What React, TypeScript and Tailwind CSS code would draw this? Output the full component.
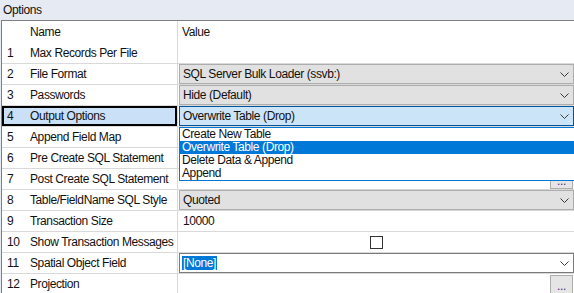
import React from "react";

type Row = {
  num: number;
  name: string;
  kind: "empty" | "combo" | "text" | "check" | "edit" | "button";
  value?: string;
};

const rows: Row[] = [
  { num: 1, name: "Max Records Per File", kind: "empty" },
  { num: 2, name: "File Format", kind: "combo", value: "SQL Server Bulk Loader (ssvb:)" },
  { num: 3, name: "Passwords", kind: "combo", value: "Hide (Default)" },
  { num: 4, name: "Output Options", kind: "combo", value: "Overwrite Table (Drop)" },
  { num: 5, name: "Append Field Map", kind: "empty" },
  { num: 6, name: "Pre Create SQL Statement", kind: "empty" },
  { num: 7, name: "Post Create SQL Statement", kind: "button" },
  { num: 8, name: "Table/FieldName SQL Style", kind: "combo", value: "Quoted" },
  { num: 9, name: "Transaction Size", kind: "text", value: "10000" },
  { num: 10, name: "Show Transaction Messages", kind: "check" },
  { num: 11, name: "Spatial Object Field", kind: "edit", value: "[None]" },
  { num: 12, name: "Projection", kind: "button" },
];

const options = ["Create New Table", "Overwrite Table (Drop)", "Delete Data & Append", "Append"];

function Chevron() {
  return (
    <svg width="9" height="5" viewBox="0 0 9 5" className="shrink-0">
      <polyline points="0.5,0.5 4.5,4.5 8.5,0.5" fill="none" stroke="#3a3a3a" strokeWidth="1" />
    </svg>
  );
}

function DotsButton() {
  return (
    <div className="ml-auto mr-[1px] flex h-full w-[23px] items-end justify-center border border-[#adadad] bg-[#e5e5e5] pb-[1px] text-[12px] leading-[12px] text-[#4a2a8a]">
      ...
    </div>
  );
}

function ValueCell({ row }: { row: Row }) {
  const active = row.num === 4;
  if (row.kind === "combo") {
    return (
      <div
        className={`flex h-full flex-1 items-center border pl-[3px] pr-[4px] ${
          active ? "border-[#005499] bg-[#cce4f7]" : "border-[#adadad] bg-[#e1e1e1]"
        }`}
      >
        <span className="flex-1 whitespace-nowrap">{row.value}</span>
        <Chevron />
      </div>
    );
  }
  if (row.kind === "text") {
    return <div className="flex h-full flex-1 items-center pl-[4px]">{row.value}</div>;
  }
  if (row.kind === "check") {
    return (
      <div className="flex h-full flex-1 items-center justify-center">
        <div className="h-[13px] w-[13px] border border-[#333333] bg-white" />
      </div>
    );
  }
  if (row.kind === "edit") {
    return (
      <div className="flex h-full flex-1 items-center border border-[#7a7a7a] bg-white pl-[2px] pr-[4px]">
        <span className="flex-1">
          <span className="bg-[#0078d7] px-[1px] text-white">{row.value}</span>
        </span>
        <Chevron />
      </div>
    );
  }
  if (row.kind === "button") {
    return (
      <div className="flex h-full flex-1 items-stretch pt-[1px]">
        <DotsButton />
      </div>
    );
  }
  return <div className="h-full flex-1" />;
}

export default function App() {
  return (
    <div
      className="relative h-[293px] w-[574px] overflow-hidden bg-[#e6eaf2] text-[12px] tracking-[-0.4px] text-[#111111]"
      style={{ fontFamily: '"Liberation Sans", Arial, sans-serif' }}
    >
      {/* Title */}
      <div className="flex h-[20px] items-center pl-[3px]">Options</div>

      {/* Grid */}
      <div className="ml-[1px] border-l border-t border-[#7f7f7f] bg-white">
        {/* Header */}
        <div className="flex h-[22px] items-center">
          <div className="flex h-full w-[176px] shrink-0 items-center border-r border-[#d9d9d9]">
            <div className="w-[26px] shrink-0" />
            <div className="pl-[2px]">Name</div>
          </div>
          <div className="pl-[4px]">Value</div>
        </div>

        {rows.map((row) => {
          const selected = row.num === 4;
          return (
            <div key={row.num} className="flex h-[21px] border-b border-[#d9d9d9]">
              <div
                className={`flex h-full w-[176px] shrink-0 items-center overflow-hidden border-r border-[#d9d9d9] ${
                  selected ? "bg-[#c9e0f7] ring-2 ring-inset ring-black" : ""
                }`}
              >
                <div className="w-[26px] shrink-0 pl-[5px]">{row.num}</div>
                <div className="min-w-0 whitespace-nowrap pl-[2px]">{row.name}</div>
              </div>
              <div className="flex h-full min-w-0 flex-1 pl-[1px]">
                <ValueCell row={row} />
              </div>
            </div>
          );
        })}
      </div>

      {/* Open dropdown list */}
      <div className="absolute left-[179px] top-[127px] w-[400px] border border-[#0078d7] bg-white">
        {options.map((opt, i) => (
          <div
            key={opt}
            className={`h-[13px] pl-[2px] leading-[13px] ${
              i === 1 ? "bg-[#0078d7] text-white" : ""
            }`}
          >
            {opt}
          </div>
        ))}
      </div>
    </div>
  );
}
